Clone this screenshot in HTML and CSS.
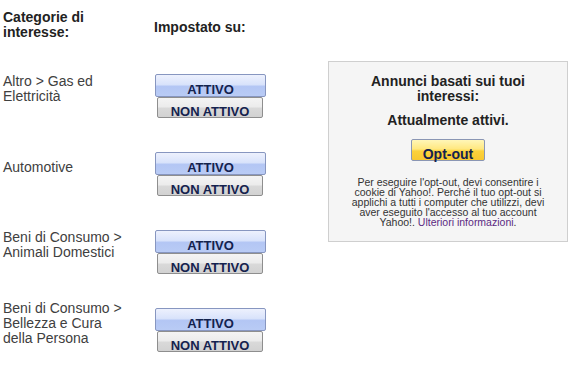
FILE: index.html
```html
<!DOCTYPE html>
<html lang="it">
<head>
    <meta charset="UTF-8">
    <title>Preferenze annunci</title>
    <link rel="stylesheet" href="styles.css">
</head>
<body>
    <div class="page">
        <div class="cats">
            <div class="row head">
                <div class="label">Categorie di interesse:</div>
                <div class="status">Impostato su:</div>
            </div>
            <div class="row">
                <div class="label">Altro &gt; Gas ed Elettricità</div>
                <div class="btns">
                    <button class="btn on">ATTIVO</button>
                    <button class="btn off">NON ATTIVO</button>
                </div>
            </div>
            <div class="row">
                <div class="label">Automotive</div>
                <div class="btns">
                    <button class="btn on">ATTIVO</button>
                    <button class="btn off">NON ATTIVO</button>
                </div>
            </div>
            <div class="row">
                <div class="label">Beni di Consumo &gt; Animali Domestici</div>
                <div class="btns">
                    <button class="btn on">ATTIVO</button>
                    <button class="btn off">NON ATTIVO</button>
                </div>
            </div>
            <div class="row">
                <div class="label">Beni di Consumo &gt; Bellezza e Cura della Persona</div>
                <div class="btns">
                    <button class="btn on">ATTIVO</button>
                    <button class="btn off">NON ATTIVO</button>
                </div>
            </div>
        </div>
        <div class="panel">
            <h2>Annunci basati sui tuoi interessi:</h2>
            <h3>Attualmente attivi.</h3>
            <button class="optout">Opt-out</button>
            <p>Per eseguire l'opt-out, devi consentire i cookie di Yahoo!. Perché il tuo opt-out si applichi a tutti i computer che utilizzi, devi aver eseguito l'accesso al tuo account Yahoo!. <a href="#">Ulteriori informazioni</a>.</p>
        </div>
    </div>
</body>
</html>
```

FILE: styles.css
```css
body {
    margin: 0;
    font-family: "Liberation Sans", Arial, sans-serif;
    background-color: #fff;
    color: #404040;
}
.page {
    display: flex;
    align-items: flex-start;
    padding: 10px 3px 0;
}
.cats {
    width: 325px;
    display: flex;
    flex-direction: column;
    gap: 20px;
}
.row {
    display: grid;
    grid-template-columns: 152px auto;
    align-items: center;
}
.label {
    max-width: 125px;
    font-size: 14px;
    line-height: 15px;
}
.head {
    height: 30px;
    color: #222;
    font-weight: bold;
}
.head .label {
    max-width: 110px;
}
.status {
    font-size: 14px;
    line-height: 15px;
    padding-top: 4px;
    margin-left: -1px;
}
.btns {
    display: flex;
    flex-direction: column;
    align-items: flex-start;
    margin-top: 14px;
}
.btn {
    box-sizing: border-box;
    margin: 0;
    padding: 8px 0 0;
    font-family: "Liberation Sans", Arial, sans-serif;
    font-size: 13px;
    font-weight: bold;
    line-height: 13px;
    color: #14224e;
    text-align: center;
    border-radius: 2px;
    cursor: pointer;
}
.btn.on {
    width: 111px;
    height: 23px;
    border: 1px solid #8796c0;
    background: linear-gradient(#edf1fd 0%, #d9e3fb 45%, #b3c6f4 55%, #b9cbf5 100%);
}
.btn.off {
    width: 106px;
    height: 21px;
    margin-left: 2px;
    padding-top: 7px;
    border: 1px solid #8e8e8e;
    background: linear-gradient(#f4f4f4 0%, #ececec 45%, #d9d9d9 55%, #d2d2d2 100%);
}
.panel {
    width: 240px;
    box-sizing: border-box;
    margin-top: 51px;
    padding: 12px 18px 14px;
    background-color: #f5f5f5;
    border: 1px solid #cfcfcf;
    text-align: center;
    color: #222;
}
.panel h2,
.panel h3 {
    margin: 0;
    font-size: 14px;
    line-height: 15px;
}
.panel h3 {
    margin-top: 9px;
}
.optout {
    box-sizing: border-box;
    width: 74px;
    height: 22px;
    margin-top: 11px;
    padding: 7px 0 0;
    font-family: "Liberation Sans", Arial, sans-serif;
    font-size: 14px;
    font-weight: bold;
    line-height: 14px;
    color: #14224e;
    border: 1px solid #8a96b4;
    border-radius: 2px;
    background: linear-gradient(#fff6b8 0%, #ffe880 45%, #fcd23c 55%, #f8c830 100%);
    cursor: pointer;
}
.panel p {
    margin: 14px 0 0;
    font-size: 10.5px;
    line-height: 10px;
    color: #333;
}
.panel a {
    color: #5b2a82;
    text-decoration: none;
}
```
